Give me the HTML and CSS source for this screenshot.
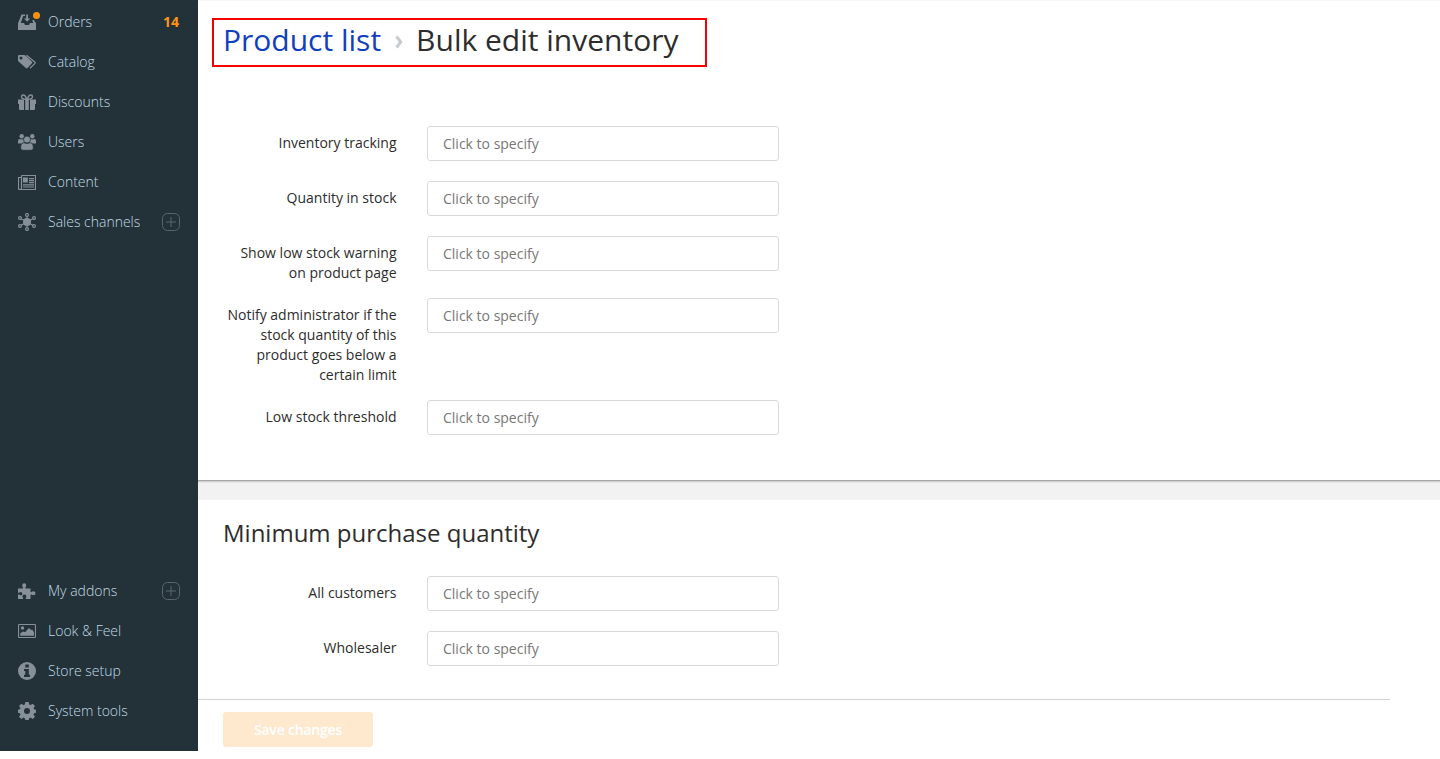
FILE: index.html
```html
<!DOCTYPE html>
<html lang="en">
<head>
<meta charset="utf-8">
<title>Bulk edit inventory</title>
<link rel="stylesheet" href="styles.css">
</head>
<body>
<div class="layout">
  <nav class="sidebar">
    <ul class="menu">
      <li class="menu-item">
        <span class="icon-wrap">
          <svg class="icon" viewBox="0 0 18 18"><path d="M3.500 1.500H7V3H5.200L2.800 10H6l1 2h4l1-2h3.200l-1-3h1.600L18 10.200V17H0v-6.800z"/><path d="M8.200 1.500h1.800V5.500h2.200L9.100 8.700 6 5.500h2.200z"/></svg>
          <span class="dot"></span>
        </span>
        <span class="text">Orders</span><span class="count">14</span>
      </li>
      <li class="menu-item">
        <svg class="icon" viewBox="0 0 18 18"><path fill-rule="evenodd" d="M0 3.200Q0 2 1.200 2H6q1 0 1.700.7l6.300 6q.7.800 0 1.600l-4.500 4.800q-.8.700-1.600 0L.8 8.800Q0 8 0 7zM3 3.600A1.500 1.500 0 1 0 3 6.600 1.500 1.500 0 1 0 3 3.600z"/><path d="M8.500 2.300l8.200 6.700q.9.800 0 1.600L12 15.200" fill="none" stroke="#879099" stroke-width="1.200"/></svg>
        <span class="text">Catalog</span>
      </li>
      <li class="menu-item">
        <svg class="icon" viewBox="0 0 18 18"><path d="M0 6.500h6V17H2q-1 0-1-1v-5H0zM7.200 6.500h3.600V17H7.200zM12 6.500h6V11h-1v5q0 1-1 1h-4z"/><path d="M8.700 6.300Q7.500 2 5.300 2 3.500 2 3.500 3.700T5.500 6zM9.300 6.300Q10.500 2 12.700 2q1.800 0 1.800 1.700T12.500 6z" fill="none" stroke="#879099" stroke-width="1.400"/></svg>
        <span class="text">Discounts</span>
      </li>
      <li class="menu-item">
        <svg class="icon" viewBox="0 0 18 18"><circle cx="3.700" cy="3.200" r="2.200"/><circle cx="14.300" cy="3.200" r="2.200"/><path d="M0 10V8q0-2 1.700-2 2 .8 4.300 0l1 4-3.700.5H.7Q0 10.500 0 10zM18 10V8q0-2-1.700-2-2 .8-4.300 0l-1 4 3.700.5h2.600q.7 0 .7-.5z"/><g class="front"><circle cx="9" cy="6.600" r="3.500"/><path d="M2.600 15q0-5 3.200-5.300 3.200 1.500 6.400 0 3.200.3 3.200 5.300 0 2.300-2.400 2.300H5q-2.400 0-2.400-2.300z"/></g></svg>
        <span class="text">Users</span>
      </li>
      <li class="menu-item">
        <svg class="icon" viewBox="0 0 18 18"><path d="M3.500 2.500h14v14h-16q-1 0-1-1V4.500h3m0-2v12.500q0 1.500-1.500 1.500" fill="none" stroke="#879099" stroke-width="1.200"/><path d="M5 4.500h4.800v5H5zM11 5h5v1.200h-5zM11 7h5v1.200h-5zM11 9h5v1.200h-5zM5 11.300h11v1.200H5zM5 13.400h11v1.200H5z"/></svg>
        <span class="text">Content</span>
      </li>
      <li class="menu-item">
        <svg class="icon" viewBox="0 0 18 18"><circle cx="9" cy="9" r="4"/><g fill="none" stroke="#879099" stroke-width="1.200"><circle cx="9" cy="1.900" r="1.400"/><circle cx="9" cy="16.100" r="1.400"/><circle cx="2" cy="5" r="1.400"/><circle cx="16" cy="5" r="1.400"/><circle cx="2" cy="13" r="1.400"/><circle cx="16" cy="13" r="1.400"/><path d="M9 3.300v11.400M3.200 5.700l11.600 6.600M14.800 5.700L3.200 12.300"/></g></svg>
        <span class="text">Sales channels</span>
        <svg class="plus" viewBox="0 0 18 18"><rect x=".5" y=".5" width="17" height="17" rx="5"/><path d="M4 9h10M9 4v10"/></svg>
      </li>
    </ul>
    <ul class="menu">
      <li class="menu-item">
        <svg class="icon" viewBox="0 0 18 18"><path d="M0 6.500h4.600q.8-.2.300-1.200Q4.200 4.500 4.200 3.200a2 2 0 0 1 4 0q0 1.300-.7 2.100-.5 1 .3 1.200H12.500v3.200q.2.800 1 .3 1-.7 2-.7a2 2 0 0 1 0 4q-1 0-2-.7-.8-.4-1 .4V17H8.200q-.8 0-.5-.9.700-.8.700-1.700a2 2 0 0 0-4 0q0 .9.700 1.700.4.900-.5.900H0v-4.200q.2-.6 1-.2 1 .7 1.700.7a1.600 1.600 0 0 0 0-3.200q-.7 0-1.700.7-.8.300-1-.4z"/></svg>
        <span class="text">My addons</span>
        <svg class="plus" viewBox="0 0 18 18"><rect x=".5" y=".5" width="17" height="17" rx="5"/><path d="M4 9h10M9 4v10"/></svg>
      </li>
      <li class="menu-item">
        <svg class="icon" viewBox="0 0 18 18"><rect x=".5" y="2.500" width="17" height="13" rx=".8" fill="none" stroke="#879099" stroke-width="1.200"/><circle cx="4.500" cy="6" r="1.700"/><path d="M2.300 13.800v-2.500L5 9.400l2 .8L11 6l2 2 1.200-.4 1.800 3v3.200z"/></svg>
        <span class="text">Look &amp; Feel</span>
      </li>
      <li class="menu-item">
        <svg class="icon" viewBox="0 0 18 18"><circle cx="9" cy="9" r="9"/><path class="cut" d="M7.300 2.500h3.500v3H7.300zM6 7h4.800v5.800H12V15H6v-2.200h1.300V9H6z"/></svg>
        <span class="text">Store setup</span>
      </li>
      <li class="menu-item">
        <svg class="icon" viewBox="0 0 18 18"><path fill-rule="evenodd" d="M7.300 0h3.400l.5 2.500 1.400.6L14.700 1.700 17 4l-1.400 2.100.5 1.300 1.900.3v3l-1.900.5-.6 1.500L17 14.700 14.700 17l-2.100-1.400-1.400.6-.5 1.800H7.300l-.5-1.800-1.400-.6L3.300 17 1 14.700l1.500-2-.6-1.500L0 10.700v-3l1.900-.4.5-1.300L1 4l2.300-2.300 2.100 1.400 1.400-.6zM9 6a3 3 0 1 0 0 6 3 3 0 1 0 0-6z"/></svg>
        <span class="text">System tools</span>
      </li>
    </ul>
  </nav>
  <main class="content">
    <section class="panel panel-inventory">
      <h1 class="breadcrumb">
        <a class="crumb-link">Product list</a>
        <svg class="chevron" viewBox="0 0 8 14"><path d="M1.500 1.500L5.700 7l-4.200 5.500"/></svg>
        <span>Bulk edit inventory</span>
      </h1>
      <div class="form">
        <div class="row"><label class="label">Inventory tracking</label><div class="field">Click to specify</div></div>
        <div class="row"><label class="label">Quantity in stock</label><div class="field">Click to specify</div></div>
        <div class="row"><label class="label">Show low stock warning on product page</label><div class="field">Click to specify</div></div>
        <div class="row"><label class="label">Notify administrator if the stock quantity of this product goes below a certain limit</label><div class="field">Click to specify</div></div>
        <div class="row"><label class="label">Low stock threshold</label><div class="field">Click to specify</div></div>
      </div>
    </section>
    <div class="divider"></div>
    <section class="panel panel-minimum">
      <h2 class="heading">Minimum purchase quantity</h2>
      <div class="form">
        <div class="row"><label class="label">All customers</label><div class="field">Click to specify</div></div>
        <div class="row"><label class="label">Wholesaler</label><div class="field">Click to specify</div></div>
      </div>
    </section>
    <footer class="actions"><button class="save" disabled>Save changes</button></footer>
  </main>
</div>
</body>
</html>
```
FILE: styles.css
```css
* { box-sizing: border-box; }
body {
  margin: 0;
  background: #fff;
  color: #2d2d2d;
  font: 14px/20px "Open Sans", "Noto Sans", sans-serif;
}
.layout { display: flex; height: 759px; overflow: hidden; }
.sidebar {
  display: flex;
  flex-direction: column;
  justify-content: space-between;
  flex: 0 0 198px;
  height: 751px;
  padding: 2px 18px 20px;
  background: #223238;
}
.menu { margin: 0; padding: 0; list-style: none; }
.menu-item { display: flex; align-items: center; height: 40px; color: #c3dae6; }
.icon-wrap { position: relative; display: flex; }
.icon { display: block; flex: none; width: 18px; height: 18px; fill: #879099; }
.icon .cut { fill: #223238; }
.icon .front { stroke: #223238; stroke-width: 0.8; }
.dot {
  position: absolute;
  top: -1px;
  left: 15px;
  width: 7px;
  height: 7px;
  border-radius: 50%;
  background: #ff8f0c;
}
.text { flex: 1; margin-left: 12px; font-weight: 300; white-space: nowrap; }
.count { margin-right: 1px; color: #ff941a; font-weight: 700; }
.plus { width: 18px; height: 18px; fill: none; stroke: #59666c; }
.content { flex: 1; min-width: 0; border-top: 1px solid #f7f8f8; }
.panel { padding-left: 14px; }
.panel-inventory { height: 479px; padding-top: 17px; }
.breadcrumb {
  display: flex;
  align-items: center;
  width: 495px;
  height: 49px;
  margin: 0 0 59px;
  padding: 0 0 6px 9px;
  border: 2px solid #f60000;
  font-size: 30px;
  line-height: 40px;
  font-weight: 400;
  white-space: nowrap;
}
.crumb-link { color: #1140bd; }
.chevron { flex: none; width: 8px; height: 14px; margin: 5px 13px 0 14px; fill: none; stroke: #c6cbcf; stroke-width: 3; }
.form { padding-left: 11px; }
.row { display: flex; align-items: flex-start; padding-bottom: 15px; }
.label { width: 173.5px; margin-right: 30.5px; padding-top: 7px; text-align: right; }
.field {
  width: 352px;
  height: 35px;
  margin-bottom: 5px;
  padding: 7px 15px;
  border: 1px solid #dadada;
  border-radius: 3px;
  color: #777;
}
.divider {
  height: 20px;
  background: linear-gradient(#a5a8a5 0 1px, #d0d0d0 1px 2px, #e7e7e7 2px 3px, #f2f2f2 3px);
}
.panel-minimum { height: 199px; padding-top: 16px; }
.heading { margin: 0 0 26px 11px; font-size: 24px; line-height: 34px; font-weight: 400; }
.actions { width: 1192px; padding: 12px 25px 0; border-top: 1px solid #d3d3d3; }
.save {
  display: block;
  width: 150px;
  height: 35px;
  padding: 0;
  border: 0;
  border-radius: 3px;
  background: #fee9cf;
  color: #fff;
  font: 600 14px/35px "Open Sans", "Noto Sans", sans-serif;
  letter-spacing: -0.2px;
}
```
